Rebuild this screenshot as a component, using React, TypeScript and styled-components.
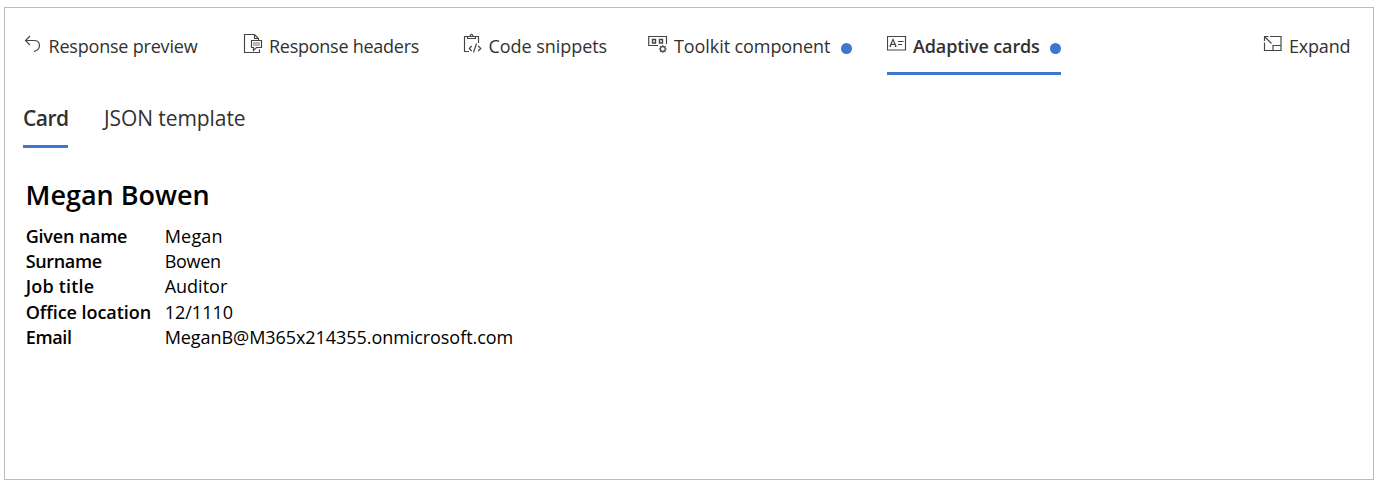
import React from "react";
import styled, { createGlobalStyle } from "styled-components";

const Global = createGlobalStyle`
  * { box-sizing: border-box; }
  body { margin: 0; background: #fff; font-family: "Segoe UI", "Open Sans", "Noto Sans", sans-serif; }
`;

const Panel = styled.main`
  width: 1370px;
  height: 473px;
  margin: 7px 0 0 4px;
  border: 1px solid #bcbcbc;
  display: flow-root;
`;

const TabBar = styled.nav`
  display: flex;
  height: 67px;
  padding-left: 18px;
`;

const Tab = styled.div<{ $gap: number; $active?: boolean }>`
  display: flex;
  flex: none;
  height: 67px;
  margin-right: ${(p) => p.$gap}px;
  border-bottom: 3px solid ${(p) => (p.$active ? "#3f76d0" : "transparent")};
  color: #323130;
  font-size: 18px;
  font-weight: ${(p) => (p.$active ? 600 : 400)};
`;

const IconBox = styled.span<{ $w: number }>`
  flex: none;
  width: ${(p) => p.$w}px;
  height: 24px;
  margin-top: 24px;
  svg { display: block; }
`;

const Label = styled.span<{ $w: number; $ls: number }>`
  width: ${(p) => p.$w}px;
  margin-top: 26px;
  line-height: 24px;
  white-space: nowrap;
  letter-spacing: ${(p) => p.$ls}px;
`;

const Dot = styled.i`
  width: 11px;
  height: 11px;
  margin: 34.5px 0 0;
  border-radius: 50%;
  background: #3f76d0;
`;

const SubTabs = styled.nav`
  display: flex;
  gap: 36px;
  margin: 26px 0 0 18px;
`;

const SubTab = styled.div<{ $w: number; $ls: number; $active?: boolean }>`
  width: ${(p) => p.$w}px;
  height: 47px;
  padding-top: 2px;
  line-height: 30px;
  border-bottom: 3px solid ${(p) => (p.$active ? "#3f76d0" : "transparent")};
  color: #323130;
  font-size: 21px;
  font-weight: ${(p) => (p.$active ? 600 : 400)};
  letter-spacing: ${(p) => p.$ls}px;
  white-space: nowrap;
`;

const Title = styled.h1`
  margin: 29px 0 0 20.5px;
  font-size: 27px;
  line-height: 36px;
  font-weight: 600;
  color: #000;
`;

const Facts = styled.dl`
  display: grid;
  grid-template-columns: 139px auto;
  grid-template-rows: 25px 25px 26px 25px 25px;
  margin: 11px 0 0 20.7px;
  color: #000;
  font-size: 18px;
  line-height: 25px;
`;
const Term = styled.dt<{ $ls: number }>`
  font-weight: 600;
  white-space: nowrap;
  letter-spacing: ${(p) => p.$ls}px;
`;
const Value = styled.dd<{ $ls: number }>`
  margin: 0;
  letter-spacing: ${(p) => p.$ls}px;
`;

const Svg = ({ children }: { children: React.ReactNode }) => (
  <svg width="20" height="22" viewBox="0 0 20 22" fill="none" stroke="#444" strokeWidth="1.15">
    {children}
  </svg>
);

const Undo = () => (
  <Svg><path d="M7 4L2.5 8.5L7 13M2.5 8.5H11C17.5 8.5 18 15.5 13.5 18.5L11 19.5" /></Svg>
);
const Headers = () => (
  <Svg>
    <path d="M16.5 17.5V20.5H1.5V2.5H11.5L15.5 6.5V8M11.5 2.5V6.5H15.5" />
    <path d="M8.5 8.5H18.5V15.5H13.5L10.5 18.5V15.5H8.5Z" fill="#fff" />
    <path d="M10 11H17M10 13H17" stroke="#777" />
  </Svg>
);
const Snippets = () => (
  <Svg>
    <path d="M6 19.5H1.5V4.5H15.5V11M4.5 4.5V6.5H12.5V4.5M5.5 4.5H7C7 1.7 10 1.7 10 4.5H11.5" />
    <path d="M8.7 14L6.3 16.5L8.7 19M15.2 14L17.8 16.5L15.2 19M13.5 11.5L10.5 20.5" />
  </Svg>
);
const Toolkit = () => (
  <Svg>
    <path d="M10 13.5H.7V4.5H18.5V12" />
    <path d="M4.5 7.5H7.5V11H4.5ZM11.5 7.5H14.5V11H11.5Z" strokeWidth="1.4" />
    <circle cx="14.8" cy="17" r="2.4" />
    <path d="M14.8 13V14.6M14.8 19.4V21M10.8 17H12.4M17.2 17H18.8M12 14.2L13.1 15.3M16.5 18.7L17.6 19.8M17.6 14.2L16.5 15.3M13.1 18.7L12 19.8" />
  </Svg>
);
const Card = () => (
  <Svg>
    <path d="M.5 4.5H18.5V18H.5Z" />
    <path d="M3 14.3L6 7.5L9 14.3M4 12.3H8M2.5 14.4H4.2M7.8 14.4H9.5M11 9.5H16.5M11 12.5H15" />
  </Svg>
);
const Expand = () => (
  <Svg>
    <path d="M7 4.5H18V18.5H1.5V10.5M10 18.5V13.5H18M1.5 9V4.5H5.5M1.5 4.5L8.5 11.5" />
  </Svg>
);

export default function App() {
  return (
    <>
      <Global />
      <Panel>
        <TabBar>
          <Tab $gap={45}><IconBox $w={25.5}><Undo /></IconBox><Label $w={149.5} $ls={-0.2}>Response preview</Label></Tab>
          <Tab $gap={44}><IconBox $w={26}><Headers /></IconBox><Label $w={150} $ls={-0.26}>Response headers</Label></Tab>
          <Tab $gap={40}><IconBox $w={25.5}><Snippets /></IconBox><Label $w={119.5} $ls={-0.05}>Code snippets</Label></Tab>
          <Tab $gap={35}><IconBox $w={26}><Toolkit /></IconBox><Label $w={167} $ls={-0.08}>Toolkit component</Label><Dot /></Tab>
          <Tab $gap={202} $active><IconBox $w={26}><Card /></IconBox><Label $w={137} $ls={-0.14}>Adaptive cards</Label><Dot /></Tab>
          <Tab $gap={0}><IconBox $w={26}><Expand /></IconBox><Label $w={61} $ls={-0.2}>Expand</Label></Tab>
        </TabBar>
        <SubTabs>
          <SubTab $w={45} $ls={-0.5} $active>Card</SubTab>
          <SubTab $w={143} $ls={-0.08}>JSON template</SubTab>
        </SubTabs>
        <Title>Megan Bowen</Title>
        <Facts>
          <Term $ls={-0.2}>Given name</Term><Value $ls={0.2}>Megan</Value>
          <Term $ls={-0.35}>Surname</Term><Value $ls={-0.3}>Bowen</Value>
          <Term $ls={0.2}>Job title</Term><Value $ls={0}>Auditor</Value>
          <Term $ls={-0.05}>Office location</Term><Value $ls={0}>12/1110</Value>
          <Term $ls={-0.35}>Email</Term><Value $ls={-0.06}>MeganB@M365x214355.onmicrosoft.com</Value>
        </Facts>
      </Panel>
    </>
  );
}
